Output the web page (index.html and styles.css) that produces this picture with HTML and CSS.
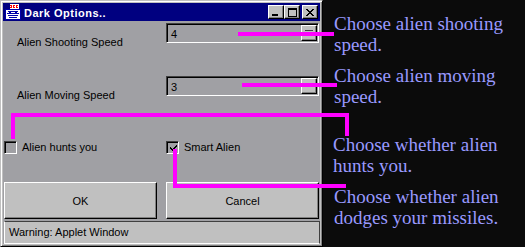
FILE: index.html
```html
<!DOCTYPE html>
<html>
<head>
<meta charset="utf-8">
<link rel="stylesheet" href="styles.css">
</head>
<body>
<div class="page">
  <div class="window">
    <div class="titlebar">
      <svg class="app-icon" width="16" height="16" viewBox="0 0 16 16" shape-rendering="crispEdges">
        <rect x="0" y="5" width="16" height="11" fill="#0000a8"/>
        <rect x="1" y="6" width="14" height="9" fill="#ffffff"/>
        <rect x="3" y="7" width="10" height="1" fill="#0000a8"/>
        <rect x="2" y="9" width="12" height="1" fill="#0000a8"/>
        <rect x="3" y="11" width="10" height="1" fill="#0000a8"/>
        <rect x="4" y="13" width="8" height="1" fill="#0000a8"/>
        <rect x="4" y="8" width="2" height="1" fill="#0000a8"/>
        <rect x="10" y="8" width="2" height="1" fill="#0000a8"/>
        <rect x="5" y="0" width="9" height="5" fill="#ffffff"/>
        <rect x="5" y="1" width="2" height="1" fill="#ff0000"/>
        <rect x="6" y="2" width="1" height="2" fill="#ff0000"/>
        <rect x="8" y="1" width="2" height="1" fill="#ff0000"/>
        <rect x="8" y="2" width="1" height="2" fill="#ff0000"/>
        <rect x="8" y="3" width="2" height="1" fill="#ff0000"/>
        <rect x="11" y="1" width="2" height="1" fill="#ff0000"/>
        <rect x="11" y="2" width="1" height="2" fill="#ff0000"/>
        <rect x="11" y="3" width="2" height="1" fill="#ff0000"/>
        <rect x="5" y="3" width="1" height="1" fill="#ff0000"/>
      </svg>
      <span class="title">Dark Options..</span>
      <div class="title-buttons">
        <span class="tbtn"><svg width="8" height="7" viewBox="0 0 8 7" shape-rendering="crispEdges"><rect x="0" y="5" width="6" height="2" fill="#000"/></svg></span>
        <span class="tbtn"><svg width="9" height="9" viewBox="0 0 9 9" shape-rendering="crispEdges"><path d="M0 0h9v2H0z M0 0h1v9H0z M8 0h1v9H8z M0 8h9v1H0z" fill="#000"/></svg></span>
        <span class="tbtn close"><svg width="8" height="7" viewBox="0 0 8 7" shape-rendering="crispEdges"><path d="M0 0h2v1h1v1h2V1h1V0h2v1H7v1H6v1H5v1h1v1h1v1h1v1H6V6H5V5H3v1H2v1H0V6h1V5h1V4h1V3H2V2H1V1H0z" fill="#000"/></svg></span>
      </div>
    </div>
    <div class="content">
      <div class="row speed-row first">
        <span class="speed-label">Alien Shooting Speed</span>
        <div class="choice"><span class="choice-value">4</span><span class="choice-btn"><i class="dash"></i></span></div>
      </div>
      <div class="row speed-row second">
        <span class="speed-label">Alien Moving Speed</span>
        <div class="choice"><span class="choice-value">3</span><span class="choice-btn"></span></div>
      </div>
      <div class="row check-row">
        <div class="check"><span class="box"></span><span class="check-label">Alien hunts you</span></div>
        <div class="check"><span class="box"><svg width="9" height="9" viewBox="0 0 9 9" shape-rendering="crispEdges"><path d="M7 1h1v2H7v1H6v1H5v1H4v1H3V6H2V5H1V3h1v1h1v1h1V4h1V3h1V2h1z" fill="#000"/></svg></span><span class="check-label">Smart Alien</span></div>
      </div>
      <div class="row button-row">
        <button class="btn">OK</button>
        <button class="btn">Cancel</button>
      </div>
      <div class="status">Warning: Applet Window</div>
    </div>
  </div>
  <div class="notes">
    <p class="note n1">Choose alien shooting<br>speed.</p>
    <p class="note n2">Choose alien moving<br>speed.</p>
    <p class="note n3">Choose whether alien<br>hunts you.</p>
    <p class="note n4">Choose whether alien<br>dodges your missiles.</p>
  </div>
  <div class="mark m1"></div>
  <div class="mark m2"></div>
  <div class="mark m3a"></div>
  <div class="mark m3b"></div>
  <div class="mark m3c"></div>
  <div class="mark m4a"></div>
  <div class="mark m4b"></div>
</div>
</body>
</html>
```
FILE: styles.css
```css
html, body {
  margin: 0;
  padding: 0;
  background: #0b0b0b;
  overflow: hidden;
}
.page {
  position: relative;
  display: flex;
  align-items: flex-start;
  width: 525px;
  height: 247px;
}
.window {
  box-sizing: border-box;
  width: 323px;
  height: 247px;
  flex: none;
  border: 1px solid;
  border-color: #c0c0c0 #000 #000 #c0c0c0;
  box-shadow: inset 1px 1px #fff, inset -1px -1px #808080;
  padding: 2px;
  background: #c0c0c0;
  display: flex;
  flex-direction: column;
  font-family: "Liberation Sans", Arial, sans-serif;
  font-size: 11px;
  color: #000;
}
.titlebar {
  height: 18px;
  background: #000080;
  display: flex;
  align-items: flex-start;
  padding: 1px 2px 0 2px;
  box-sizing: border-box;
}
.app-icon {
  flex: none;
  display: block;
}
.title {
  color: #fff;
  font-weight: bold;
  font-size: 11px;
  letter-spacing: 0.5px;
  line-height: 14px;
  margin-left: 3px;
  margin-top: 2px;
}
.title-buttons {
  margin-left: auto;
  display: flex;
  margin-top: 1px;
}
.tbtn {
  box-sizing: border-box;
  width: 16px;
  height: 14px;
  background: #c0c0c0;
  border: 1px solid;
  border-color: #fff #000 #000 #fff;
  box-shadow: inset -1px -1px #808080;
  display: flex;
  align-items: center;
  justify-content: center;
}
.tbtn.close {
  margin-left: 2px;
}
.content {
  flex: 1;
  background: #a0a0a4;
  display: flex;
  flex-direction: column;
}
.row {
  display: grid;
  grid-template-columns: 153px 153px;
  column-gap: 9px;
  margin-left: 1px;
}
.speed-row.first { margin-top: 2px; }
.speed-row.second { margin-top: 27px; }
.speed-label {
  padding-top: 13px;
  padding-left: 13px;
  line-height: 13px;
}
.choice {
  box-sizing: border-box;
  height: 20px;
  border: 1px solid;
  border-color: #404040 #fff #fff #404040;
  box-shadow: inset 1px 1px #000;
  display: flex;
  align-items: stretch;
  padding: 1px 1px 1px 1px;
  align-self: start;
}
.choice-value {
  flex: 1;
  padding-left: 3px;
  padding-top: 3px;
  line-height: 13px;
}
.choice-btn {
  box-sizing: border-box;
  width: 16px;
  background: #c0c0c0;
  border: 1px solid;
  border-color: #fff #000 #000 #fff;
  box-shadow: inset -1px -1px #808080;
  display: flex;
  justify-content: center;
}
.dash {
  display: block;
  width: 8px;
  height: 1px;
  margin-top: 4px;
  background: #404040;
}
.check-row { margin-top: 39px; }
.check {
  display: flex;
  align-items: center;
  height: 13px;
}
.box {
  box-sizing: border-box;
  width: 13px;
  height: 13px;
  border: 1px solid;
  border-color: #404040 #fff #fff #404040;
  box-shadow: inset 1px 1px #000;
  background: #a0a0a4;
  display: flex;
  align-items: center;
  justify-content: center;
  padding: 1px 0 0 1px;
}
.check-label {
  margin-left: 5px;
  line-height: 13px;
}
.button-row { margin-top: 28px; }
.btn {
  box-sizing: border-box;
  height: 37px;
  margin: 0;
  padding: 0;
  background: #c0c0c0;
  border: 1px solid;
  border-color: #fff #000 #000 #fff;
  box-shadow: inset -1px -1px #808080;
  font-family: "Liberation Sans", Arial, sans-serif;
  font-size: 11px;
  color: #000;
}
.status {
  box-sizing: border-box;
  margin: 2px 0 0 1px;
  width: 316px;
  height: 23px;
  background: #c0c0c0;
  border: 1px solid;
  border-color: #404040 #404040 #fff #fff;
  padding-left: 4px;
  line-height: 21px;
}
.notes {
  margin-left: 11px;
  font-family: "Liberation Serif", "Times New Roman", serif;
  font-size: 19px;
  line-height: 21px;
  color: #9999ff;
}
.note { margin: 0; white-space: nowrap; }
.n1 { margin-top: 13px; }
.n2 { margin-top: 10px; }
.n3 { margin-top: 27px; margin-left: -1px; }
.n4 { margin-top: 10px; }
.mark {
  position: absolute;
  background: #ff00ff;
}
.m1 { left: 238px; top: 32px; width: 96px; height: 4px; }
.m2 { left: 242px; top: 83px; width: 95px; height: 4px; }
.m3a { left: 11px; top: 113px; width: 338px; height: 4px; }
.m3b { left: 11px; top: 113px; width: 4px; height: 26px; }
.m3c { left: 345px; top: 113px; width: 4px; height: 23px; }
.m4a { left: 173px; top: 149px; width: 4px; height: 39px; }
.m4b { left: 173px; top: 184px; width: 173px; height: 4px; }
```
